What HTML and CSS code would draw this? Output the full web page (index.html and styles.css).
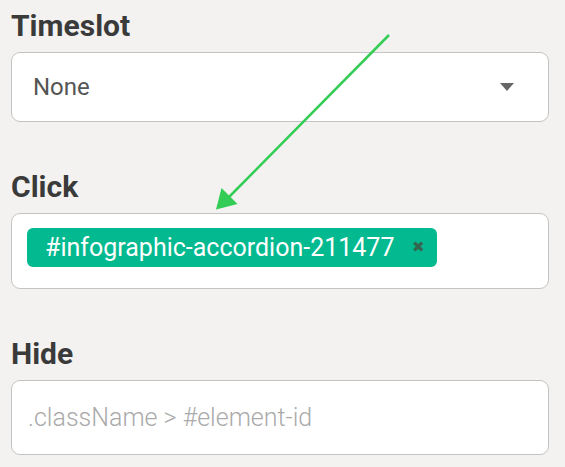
FILE: index.html
```html
<!DOCTYPE html>
<html lang="en">
<head>
  <meta charset="UTF-8" />
  <title>Trigger settings</title>
  <link rel="stylesheet" href="styles.css">
</head>
<body>
  <form class="settings">
    <div class="field">
      <label class="field-label">Timeslot</label>
      <div class="select">
        <span class="select-value">None</span>
        <span class="select-caret"></span>
      </div>
    </div>

    <div class="field">
      <label class="field-label">Click</label>
      <div class="tags">
        <span class="tag">#infographic-accordion-211477 <span class="tag-remove">&#10006;</span></span>
      </div>
    </div>

    <div class="field">
      <label class="field-label" for="hide-input">Hide</label>
      <input class="text-input" id="hide-input" placeholder=".className > #element-id" />
    </div>
  </form>

  <svg class="pointer" width="565" height="467" viewBox="0 0 565 467">
    <line x1="389" y1="35" x2="229" y2="197" stroke="#33cc55" stroke-width="2.5" />
    <polygon points="221.5,188 237.5,204 216,209.5" fill="#33cc55" />
  </svg>
</body>
</html>
```

FILE: styles.css
```css
body {
  margin: 8px;
  background: #f3f2f0;
  font-family: Roboto, "Liberation Sans", sans-serif;
  color: #3b3b3b;
}

.settings {
  display: flex;
  flex-direction: column;
  gap: 47px;
}

.field {
  display: flex;
  flex-direction: column;
  gap: 8px;
  margin-left: 3px;
  width: 538px;
}

.field-label {
  font-size: 30px;
  font-weight: 700;
  line-height: 36px;
  color: #3a3a3a;
}

.select {
  height: 68px;
  border: 1px solid #c3c3c3;
  border-radius: 9px;
  background: #fff;
  display: flex;
  align-items: center;
  justify-content: space-between;
  padding: 0 34px 0 21px;
}

.select-value {
  font-size: 24px;
  color: #555;
}

.select-caret {
  width: 0;
  height: 0;
  border-left: 7.5px solid transparent;
  border-right: 7.5px solid transparent;
  border-top: 8px solid #666;
}

.tags {
  height: 76px;
  box-sizing: border-box;
  border: 1px solid #c3c3c3;
  border-radius: 9px;
  background: #fff;
  padding: 14px 15px;
  display: flex;
  align-items: flex-start;
}

.tag {
  height: 39px;
  box-sizing: border-box;
  background: #03b98f;
  color: #fff;
  border-radius: 6px;
  font-size: 25px;
  line-height: 39px;
  padding: 0 12px 0 18px;
  display: flex;
  align-items: center;
  gap: 18px;
}

.tag-remove {
  font-size: 15px;
  color: #34654f;
}

.text-input {
  height: 75px;
  box-sizing: border-box;
  border: 1px solid #c3c3c3;
  border-radius: 9px;
  background: #fff;
  padding: 0 16px;
  font-family: inherit;
  font-size: 25px;
  font-weight: 300;
  outline: none;
}

.text-input::placeholder {
  color: #aaa;
}

.pointer {
  position: absolute;
  top: 0;
  left: 0;
  pointer-events: none;
}
```
